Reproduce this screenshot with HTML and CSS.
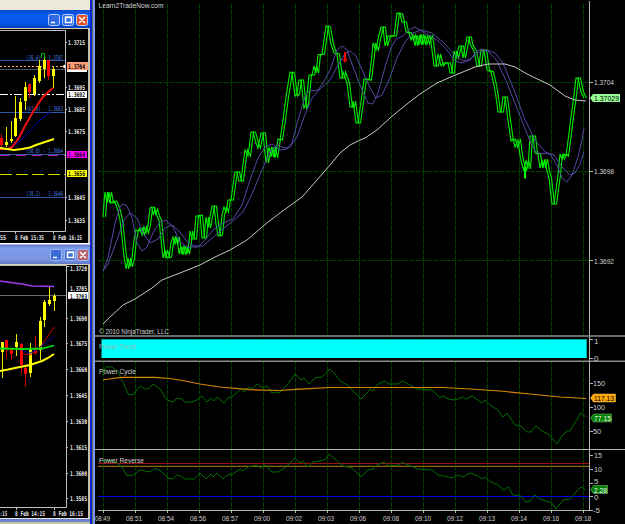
FILE: index.html
```html
<!DOCTYPE html>
<html lang="en">
  <head>
    <meta charset="UTF-8" />
    <title>Learn2TradeNow.com</title>
    <link rel="stylesheet" href="styles.css" />
  </head>
  <body>
    <div class="desktop">
      <!-- left side: two small chart windows -->
      <div class="left-section">
        <div class="toolbar"></div>
        <div class="window">
          <div class="titlebar">
            <svg class="buttons" width="42" height="14" viewBox="0 0 42 14">
              <rect class="btn" x="1.5" y="1.5" width="11" height="11" rx="2" />
              <rect class="btn" x="15.5" y="1.5" width="11" height="11" rx="2" />
              <rect class="btn btn-close" x="29.5" y="1.5" width="11" height="11" rx="2" />
              <path class="btn-icon" d="M4 9.5h4M18.5 4.5h6v5h-6zM18 4h7M32 4l6 6M38 4l-6 6" />
            </svg>
          </div>
          <svg class="chart" width="88" height="214" viewBox="0 29 88 214">
            <path class="frame" d="M0 30.5H65.5V231.5H0" />
            <path class="frame" d="M65 42.5h2M65 87.5h2M65 109.5h2M65 131.5h2M65 197.5h2M65 220.5h2M15.5 231v3M53.5 231v3" />
            <path class="fibo" d="M0 60.5H65M0 112.5H65M0 154.5H65M0 197.5H65" />
            <path stroke="#49545f" d="M0 69.5H65" />
            <path stroke="#ffa07a" stroke-dasharray="2 2" d="M0 66.5H65" />
            <path stroke="#fff" stroke-dasharray="8 2 2 2" d="M0 94.5H65" />
            <path stroke="#b020c0" stroke-dasharray="10 6" d="M0 155.5H65" />
            <path stroke="#d8d800" stroke-dasharray="12 4" d="M0 174.5H65" />
            <g class="fibo-text">
              <text x="26" y="59.5" textLength="37">(76.4) - 1.3707</text>
              <text x="26" y="111" textLength="37">(61.8) - 1.3683</text>
              <text x="26" y="153" textLength="37">(50.0) - 1.3664</text>
              <text x="26" y="196" textLength="37">(38.2) - 1.3646</text>
            </g>
            <path class="up" d="M6.5 127V147M11.5 121V143M15.5 96V137M20.5 98V121M25.5 82V110M34.5 75V96M39.5 60V83M44.5 55V78M53.5 66V88" />
            <path class="up body" d="M6.5 142V145M11.5 139V141M15.5 118V136M20.5 102V119M25.5 87V101M34.5 78V94M39.5 66V81M44.5 60V69M53.5 69V76" />
            <path class="down" d="M1.5 134V150M29.5 84V98M48.5 60V80" />
            <path class="down body" d="M1.5 138V145M29.5 84V92M48.5 60V76" />
            <path stroke="#00c000" fill="none" d="M40.5 57.5h1v-4h3v4h1" />
            <polyline class="thin-blue" points="12,147 20,141 30,131 40,120 50,112" />
            <polyline class="thick-red" points="0,149 8,149 12,147 16,142 20,136 25,126 33,112 38,104 43,97 48,92 53,88" />
            <polyline class="thick-yellow" points="0,148 7,149 14,150 22,149 30,147.5 36,145 42,143 48,141 54,139" />
            <g class="scale">
              <text x="68" y="45" textLength="17">1.3715</text>
              <text x="68" y="89.5" textLength="17">1.3695</text>
              <text x="68" y="112" textLength="17">1.3685</text>
              <text x="68" y="134" textLength="17">1.3675</text>
              <text x="68" y="200" textLength="17">1.3645</text>
              <text x="68" y="223" textLength="17">1.3635</text>
              <text x="0" y="240" textLength="6">55</text>
              <text x="15" y="240" textLength="29">8 Feb 15:35</text>
              <text x="53" y="240" textLength="29">8 Feb 16:15</text>
            </g>
            <g class="scale dark">
              <rect x="67" y="66" width="20" height="6" fill="#fff" />
              <rect x="67" y="62" width="21" height="8" fill="#ff9c78" />
              <text x="68" y="68.5" textLength="17">1.3704</text>
              <rect x="67" y="91" width="20" height="7" fill="#fff" />
              <text x="68" y="97" textLength="17">1.3692</text>
              <rect x="67" y="151" width="20" height="7" fill="#f0f" />
              <text x="68" y="157" textLength="17">1.3664</text>
              <rect x="67" y="170" width="20" height="7" fill="#ff0" />
              <text x="68" y="176" textLength="17">1.3656</text>
            </g>
            <path fill="#fff" d="M62 66.5l3-2v4z" />
          </svg>
        </div>
        <div class="window second">
          <div class="titlebar">
            <svg class="buttons" width="42" height="14" viewBox="0 0 42 14">
              <rect class="btn" x="1.5" y="1.5" width="11" height="11" rx="2" />
              <rect class="btn" x="15.5" y="1.5" width="11" height="11" rx="2" />
              <rect class="btn btn-close" x="28.5" y="1.5" width="11" height="11" rx="2" />
              <path class="btn-icon" d="M4 9.5h4M18.5 4.5h6v5h-6zM18 4h7M31 4l6 6M37 4l-6 6" />
            </svg>
          </div>
          <svg class="chart" width="88" height="253" viewBox="0 265 88 253">
            <path class="frame" d="M0 265.5H66.5V507.5H0" />
            <path class="frame" d="M66 266.5h3M66 318.5h2M66 343.5h2M66 369.5h2M66 395.5h2M66 421.5h2M66 447.5h2M66 473.5h2M66 498.5h2M16.5 507v3M54.5 507v3" />
            <path stroke="#5c6b76" d="M0 295.5H66" />
            <path class="up" d="M2.5 342V378M16.5 334V356M30.5 343V377M40.5 317V360M44.5 300V327M49.5 287V306M54.5 294V311" />
            <path class="up body" d="M2.5 342V352M16.5 342V347M30.5 349V373M40.5 321V350M44.5 302V320M49.5 300V304M54.5 296V301" />
            <path class="down" d="M6.5 340V358M11.5 349V360M21.5 343V373M25.5 364V387M35.5 336V355" />
            <path class="down body" d="M6.5 340V350M11.5 349V354M21.5 344V365M25.5 368V374M35.5 348V353" />
            <polyline class="thin-red" points="20,351 24,354 30,355 36,351 42,345 48,336 54,327" />
            <polyline class="thin-blue" points="22,350 30,353 38,349 44,344 54,337" />
            <polyline class="thick-green" points="0,348.5 24,349 42,348.5 54,345.5" />
            <polyline class="thick-purple" points="0,281 14,283 22,284 32,286 54,286.5" />
            <polyline class="thick-yellow" points="0,371 8,369.5 15,368 30,365 42,361 48,358 54,354" />
            <g class="scale">
              <text x="70" y="271" textLength="17">1.3720</text>
              <text x="70" y="291" textLength="17">1.3705</text>
              <text x="70" y="321" textLength="17">1.3690</text>
              <text x="70" y="346" textLength="17">1.3675</text>
              <text x="70" y="372" textLength="17">1.3660</text>
              <text x="70" y="398" textLength="17">1.3645</text>
              <text x="70" y="424" textLength="17">1.3630</text>
              <text x="70" y="450" textLength="17">1.3615</text>
              <text x="70" y="476" textLength="17">1.3600</text>
              <text x="70" y="501" textLength="17">1.3585</text>
              <text x="0" y="515.5" textLength="7">:15</text>
              <text x="15" y="515.5" textLength="30">8 Feb 14:15</text>
              <text x="53" y="515.5" textLength="30">8 Feb 16:15</text>
            </g>
            <g class="scale dark">
              <rect x="68" y="292" width="20" height="7" fill="#fff" />
              <text x="70" y="298.5" textLength="17">1.3703</text>
            </g>
          </svg>
        </div>
        <div class="window-bottom"></div>
      </div>
      <div class="divider"></div>

      <!-- right side: price chart and indicator panels -->
      <div class="right-section">
        <svg class="panel" width="530" height="337" viewBox="95 0 530 337">
          <defs>
            <path id="grid" d="M103.5 0V524M135.5 0V524M167.5 0V524M199.5 0V524M231.5 0V524M263.5 0V524M295.5 0V524M327.5 0V524M359.5 0V524M391.5 0V524M423.5 0V524M455.5 0V524M487.5 0V524M519.5 0V524M551.5 0V524M583.5 0V524" />
            <polyline id="price" points="103,217 104,203 105,192 107,203 109,192 111,203 114,201 116,205 118,211 120,220 122,238 124,256 126,269 128,258 130,267 132,258 134,240 136,230 138,231 140,228 142,235 144,227 146,233 148,225 150,208 152,207 153,215 155,209 157,216 159,220 161,240 163,258 165,250 167,258 169,257 171,243 173,237 175,244 177,237 179,254 181,246 183,255 185,246 187,254 189,242 190,231 192,239 194,239 196,216 198,216 200,215 202,238 204,238 206,217 208,228 210,217 212,206 214,206 216,224 218,236 220,235 222,215 224,207 226,212 228,200 231,200 233,185 235,172 237,172 239,181 241,181 243,164 245,150 248,156 251,132 253,132 256,143 258,148 261,133 263,133 266,163 269,147 271,157 273,147 275,158 278,139 280,140 283,120 286,97 290,72 292,73 295,96 297,94 299,80 301,80 304,108 306,104 309,75 312,75 314,66 316,73 318,55 322,54 326,26 328,27 331,44 334,53 337,54 340,78 342,78 343,72 347,83 350,107 352,107 353,101 356,123 358,123 361,102 364,79 369,80 372,55 373,43 376,50 378,39 381,27 383,27 385,46 388,36 394,36 397,13 400,14 402,22 404,22 406,32 409,33 411,40 413,35 415,46 417,35 419,45 421,34 423,45 425,35 427,44 430,35 432,50 434,66 436,66 438,54 441,66 443,63 448,63 450,73 452,73 454,51 456,58 459,46 461,46 463,58 467,37 469,37 470,44 474,51 477,66 479,66 481,50 484,50 487,70 491,72 494,85 496,97 498,112 501,112 503,97 505,97 508,120 511,141 513,139 515,147 518,140 520,155 522,165 524,170 526,160 528,169 530,136 533,136 535,153 538,154 540,168 542,160 543,168 545,159 547,171 549,178 552,204 554,204 558,175 560,154 562,159 564,154 566,156 568,141 571,117 574,95 576,78 578,78 581,92 584,98" />
          </defs>
          <use class="grid" href="#grid" y="4" />
          <path class="grid" d="M98 82.5H589M98 171.5H589M98 260.5H589" />
          <use class="price" href="#price" />
          <use class="price" href="#price" x="2.5" />
          <polyline class="average" points="103,271 108,258 115,223 120,207 123,204 127,206 132,218 137,243 142,251 147,247 153,233 160,222 166,220 173,227 180,242 187,247 198,247 205,240 213,230 223,223 233,219 242,205 250,180 258,158 265,147 272,144 280,150 287,149 292,143 298,120 305,97 309,91 318,90 323,83 330,70 337,50 342,46 347,50 353,67 362,90 368,103 373,104 378,93 385,67 391,48 396,39 403,36 409,30 415,27 423,32 437,40 447,50 455,61 462,63 470,60 476,52 481,49 488,51 497,61 507,83 520,116 532,146 537,153 550,154 557,165 562,178 567,182 572,175 578,157 582,140 584,128" />
          <polyline class="average" points="103,271 108,264 117,240 124,220 130,213 137,218 143,233 150,243 158,239 165,228 172,225 180,232 188,243 195,246 203,246 212,238 225,227 233,221 243,212 252,194 262,170 270,152 277,145 285,148 290,147 297,137 304,117 312,98 320,89 330,80 338,65 345,54 350,51 356,56 363,72 370,88 376,98 382,95 389,80 397,58 405,42 413,33 421,30 432,33 444,43 455,55 463,61 470,59 478,53 487,50 495,53 503,63 514,90 525,120 535,140 545,152 554,155 562,167 570,175 575,173 580,164 584,152" />
          <polyline class="long-average" points="103,324 108,319 123,305 135,299 152,288 162,280 180,273 200,265 215,257 230,250 247,240 268,222 284,210 302,197 317,180 330,165 340,153 350,145 358,141 365,138 377,130 390,118 407,104 420,94 437,83 453,76 475,67 488,64 505,64 515,67 527,74 550,85 565,96 575,100 586,101" />
          <path fill="#f00" d="M344 52h2v7h1.5l-2.5 4-2.5-4H344z" />
          <path fill="#0f0" d="M524 178.5v-8h-1.5l2.5-3 2.5 3H526v8z" />
          <path class="axis" d="M589.5 1V337M590 82.5h3M590 171.5h3M590 260.5h3" />
          <path class="border" d="M95 336H625" />
          <g class="label">
            <text x="98.5" y="8" textLength="65">Learn2TradeNow.com</text>
            <text x="99" y="333.5" textLength="70">© 2010 NinjaTrader, LLC</text>
            <text x="594" y="85" textLength="20">1.3704</text>
            <text x="594" y="174" textLength="20">1.3698</text>
            <text x="594" y="263.5" textLength="20">1.3692</text>
          </g>
          <path fill="#9f9" d="M590 98l3-4h27v8h-27z" />
          <text class="label dark" x="594" y="101" textLength="25">1.37029</text>
        </svg>

        <svg class="panel" width="530" height="25" viewBox="95 337 530 25">
          <rect x="101.5" y="339" width="485" height="19" fill="#0ff" />
          <path stroke="#00a8a8" d="M102 339.5H586.5V358" fill="none" />
          <path class="axis" d="M589.5 337V362M590 339.5h3M590 358.5h3" />
          <path class="border" d="M95 361.3H625" />
          <g class="label">
            <text class="trend-title" x="99" y="349" textLength="37">Power Trend</text>
            <text x="594" y="344">1</text>
            <text x="594" y="361">0</text>
          </g>
        </svg>

        <svg class="panel" width="530" height="88" viewBox="95 362 530 88">
          <use class="grid" href="#grid" />
          <polyline class="cycle" points="103,375 105,368 107,367 112,367 118,372 123,382 128,394 133,395 140,386 145,389 148,389 153,384 160,389 167,400 173,402 177,398 182,399 185,402 192,402 197,400 202,396 207,402 211,398 214,401 217,397 224,403 228,398 233,396 241,389 244,392 249,387 252,389 257,384 263,388 267,386 272,393 277,392 279,393 287,385 295,374 301,380 304,378 309,384 315,378 322,377 326,373 330,369 335,374 340,381 349,386 353,391 357,395 361,399 367,393 370,389 373,391 378,384 385,381 388,384 398,384 403,381 408,384 417,389 432,390 440,398 443,396 448,399 455,400 463,397 466,399 472,396 478,400 482,403 485,400 490,405 498,410 503,417 507,413 515,425 521,426 527,432 531,432 536,426 542,431 548,434 557,444 562,436 567,431 570,431 576,421 581,413 586,417" />
          <polyline class="signal" points="103,380 112,378.5 122,377.3 155,377.3 170,378.5 185,381 200,384 220,387 250,389.7 280,390.5 300,389.2 330,387.5 443,387.5 470,389 500,391 530,394 560,397 586,398.5" />
          <path class="axis" d="M589.5 362V450M590 383.5h3M590 407.5h3M590 431.5h3" />
          <path class="border thin" d="M95 449.5H625" />
          <g class="label">
            <text x="99" y="374" textLength="37">Power Cycle</text>
            <text x="593" y="386" textLength="12">150</text>
            <text x="593" y="410" textLength="12">100</text>
            <text x="593" y="434" textLength="8">50</text>
          </g>
          <path fill="#ffa500" stroke="#f7c368" stroke-width=".5" d="M590.5 398l3-4h22v8h-22z" />
          <text class="label dark" x="594" y="401" textLength="20">117.13</text>
          <path fill="#008000" stroke="#8fc88f" stroke-width=".5" d="M590.5 418l3-4h18v8h-18z" />
          <text class="label white" x="594" y="421" textLength="17">77.15</text>
        </svg>

        <svg class="panel" width="530" height="74" viewBox="95 450 530 74">
          <use class="grid" href="#grid" y="-14" />
          <path stroke="#a01010" d="M98 463.5H589" />
          <path stroke="#b08400" d="M98 466.3H589" />
          <path stroke="#0000e0" d="M98 496.5H589" />
          <polyline class="cycle" points="103,461 110,460 117,463 122,467 127,476 133,475 140,470 150,472 155,468 162,472 168,478 173,479 177,475 180,476 185,479 194,479 200,473 206,479 211,474 213,477 217,473 223,479 227,475 233,474 240,469 243,471 248,467 257,465 260,468 265,465 272,472 278,472 285,468 295,458 300,463 303,461 308,467 313,462 320,461 326,459 329,454 335,459 343,466 352,468 357,473 361,477 368,470 373,469 377,465 384,462 388,466 399,465 402,462 408,465 418,469 432,470 438,475 453,478 458,475 463,477 470,473 478,476 482,479 485,477 491,482 498,485 504,490 508,487 513,495 521,496 526,502 530,501 535,495 540,499 552,503 556,509 563,500 570,499 576,492 581,487 586,490" />
          <path class="axis" d="M98 510.5H593M589.5 450V511M590 455.5h3M590 469.5h3M590 483.5h3M590 496.5h3" />
          <g class="label">
            <text x="99" y="462.5" textLength="45">Power Reverse</text>
            <text x="594" y="458" textLength="8">15</text>
            <text x="594" y="472" textLength="8">10</text>
            <text x="594" y="484">5</text>
            <text x="594" y="500">0</text>
            <text x="593" y="513" textLength="7">-5</text>
          </g>
          <path class="axis" d="M103.5 511v2M135.5 511v2M167.5 511v2M199.5 511v2M231.5 511v2M263.5 511v2M295.5 511v2M327.5 511v2M359.5 511v2M391.5 511v2M423.5 511v2M455.5 511v2M487.5 511v2M519.5 511v2M551.5 511v2M583.5 511v2" />
          <g class="label">
            <text x="95" y="521" textLength="15">08:49</text>
            <text x="126" y="521" textLength="16">08:51</text>
            <text x="158" y="521" textLength="16">08:54</text>
            <text x="190" y="521" textLength="16">08:56</text>
            <text x="222" y="521" textLength="16">08:57</text>
            <text x="254" y="521" textLength="16">09:00</text>
            <text x="286" y="521" textLength="16">09:02</text>
            <text x="318" y="521" textLength="16">09:03</text>
            <text x="350" y="521" textLength="16">09:06</text>
            <text x="383" y="521" textLength="16">09:08</text>
            <text x="415" y="521" textLength="16">09:10</text>
            <text x="447" y="521" textLength="16">09:12</text>
            <text x="479" y="521" textLength="16">09:13</text>
            <text x="511" y="521" textLength="16">09:14</text>
            <text x="543" y="521" textLength="16">09:16</text>
            <text x="575" y="521" textLength="16">09:18</text>
          </g>
          <path fill="#008000" stroke="#8fc88f" stroke-width=".5" d="M590.5 489.5l3-4h14v8h-14z" />
          <text class="label white" x="594" y="492.5" textLength="13">2.28</text>
        </svg>
      </div>
    </div>

    <script>
      // squeeze the glyphs too, not only the gaps between them
      document.querySelectorAll("text[textLength]").forEach(function (label) {
        label.setAttribute("lengthAdjust", "spacingAndGlyphs");
      });
    </script>
  </body>
</html>
```
FILE: styles.css
```css
body {
  margin: 0;
  background-color: black;
  font-family: "Liberation Sans", Arial, sans-serif;
}
.desktop {
  display: flex;
  width: 625px;
  height: 524px;
  overflow: hidden;
}
svg {
  display: block;
}

/* left windows */
.left-section {
  width: 90px;
  display: flex;
  flex-direction: column;
}
.toolbar {
  height: 10px;
  background-color: #ece9d8;
}
.window {
  background-color: #c9bfa8;
}
.titlebar {
  display: flex;
  justify-content: flex-end;
  align-items: center;
  height: 19px;
  box-sizing: border-box;
  border-bottom: 1px solid #d8d0b8;
  background: linear-gradient(#0a48c8, #0a5cf0 25%, #0553e0 80%, #0340b8);
}
.second .titlebar {
  height: 22px;
  background: linear-gradient(#fff 1px, #6078c8 2px, #7c9cec 5px, #7a94e0 80%, #5f78c8);
}
.buttons {
  margin-right: 1px;
  margin-top: 2px;
}
.second .buttons {
  margin-right: -1px;
}
.btn {
  fill: #2f68e0;
  stroke: #b8ccf8;
}
.btn-close {
  fill: #e0502c;
}
.second .btn {
  fill: #3c6cd8;
  stroke: #a0b8f0;
}
.second .btn-close {
  fill: #b8606c;
}
.btn-icon {
  fill: none;
  stroke: white;
  stroke-width: 1.5;
}
.chart {
  background-color: black;
}
.window-bottom {
  flex: 1;
  background: linear-gradient(#e8e4d4 1px, #6a80d0 1px, #6a80d0 4px, #c8c0a8 4px);
}
.frame {
  fill: none;
  stroke: #c0c0c0;
}
.fibo {
  stroke: #2f55a8;
}
.fibo-text {
  fill: #4a7ae0;
  font: 6.5px "DejaVu Sans Mono", monospace;
}
.scale {
  fill: #eee;
  font: bold 6.5px "DejaVu Sans Mono", monospace;
}
.scale.dark {
  fill: black;
}
.up {
  stroke: #e8e800;
}
.down {
  stroke: #d00000;
}
.body {
  stroke-width: 3;
}
.up.body {
  stroke: #ff0;
}
.down.body {
  stroke: #f00;
}
.thin-red {
  fill: none;
  stroke: #c00;
}
.thin-blue {
  fill: none;
  stroke: #0000b0;
}
.thick-green {
  fill: none;
  stroke: #0d0;
  stroke-width: 1.8;
}
.thick-purple {
  fill: none;
  stroke: #a03ce8;
  stroke-width: 1.6;
}
.thick-red {
  fill: none;
  stroke: #f01010;
  stroke-width: 2;
}
.thick-yellow {
  fill: none;
  stroke: #ff0;
  stroke-width: 2;
}

/* frame between the windows */
.divider {
  width: 5px;
  background: linear-gradient(90deg, #0a24d0 2px, #66705c 2px, #66705c 3px, #7a96ee 3px);
}

/* indicator panels */
.right-section {
  width: 530px;
  display: flex;
  flex-direction: column;
}
.grid {
  fill: none;
  stroke: #004000;
  stroke-dasharray: 5 1;
}
.price {
  fill: none;
  stroke: #00f000;
  stroke-width: 1.1;
}
.average {
  fill: none;
  stroke: #5448a4;
}
.long-average {
  fill: none;
  stroke: #c8c8c8;
}
.cycle {
  fill: none;
  stroke: #006e00;
}
.signal {
  fill: none;
  stroke: #d88800;
  stroke-width: 1.2;
}
.axis {
  fill: none;
  stroke: #b4b4b4;
}
.border {
  stroke: #8c8c8c;
  stroke-width: 1.6;
}
.border.thin {
  stroke: #b4b4b4;
  stroke-width: 1;
}
.label {
  fill: #d0d0d0;
  font-size: 8px;
}
.trend-title {
  fill: #98b8b8;
}
.label.dark {
  fill: black;
}
.label.white {
  fill: white;
}
```
